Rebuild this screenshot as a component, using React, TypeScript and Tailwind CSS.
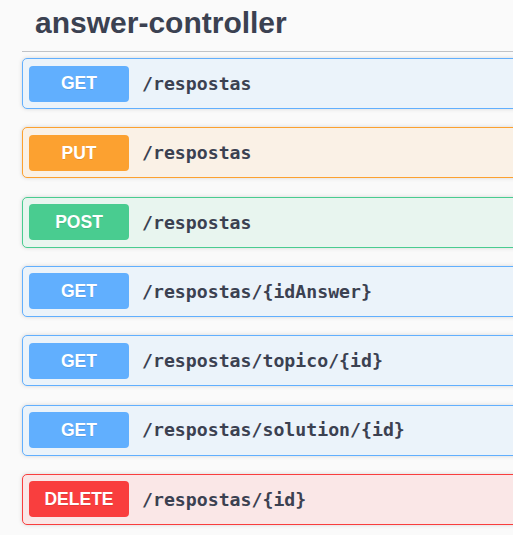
const operations = [
  { method: 'GET', path: '/respostas' },
  { method: 'PUT', path: '/respostas' },
  { method: 'POST', path: '/respostas' },
  { method: 'GET', path: '/respostas/{idAnswer}' },
  { method: 'GET', path: '/respostas/topico/{id}' },
  { method: 'GET', path: '/respostas/solution/{id}' },
  { method: 'DELETE', path: '/respostas/{id}' },
];

const methodStyles: Record<string, { box: string; badge: string }> = {
  GET: { box: 'border-[#61affe] bg-[#ebf3fa]', badge: 'bg-[#61affe]' },
  PUT: { box: 'border-[#fca130] bg-[#faf1e6]', badge: 'bg-[#fca130]' },
  POST: { box: 'border-[#49cc90] bg-[#e8f5ef]', badge: 'bg-[#49cc90]' },
  DELETE: { box: 'border-[#f93e3e] bg-[#fae7e7]', badge: 'bg-[#f93e3e]' },
};

export default function App() {
  return (
    <div className="h-[535px] w-[513px] overflow-hidden bg-[#fafafa] font-['Liberation_Sans',Arial,sans-serif] text-[#3b4151]">
      {/* Tag header */}
      <div className="ml-[22px] w-[560px] border-b border-[#c1c3c7] pb-[9px] pl-[13px] pt-[4px]">
        <h3 className="text-[30px] font-bold leading-[38px]">answer-controller</h3>
      </div>

      {/* Operations */}
      <div className="ml-[22px] mt-[6px] flex w-[560px] flex-col gap-[18.33px]">
        {operations.map((op, i) => {
          const s = methodStyles[op.method];
          return (
            <div
              key={i}
              className={`flex h-[51px] items-center rounded-[5px] border px-[6px] shadow-[0_0_4px_rgba(0,0,0,0.15)] ${s.box}`}
            >
              <span
                className={`flex h-[36px] w-[100px] items-center justify-center rounded-[4px] text-[17.5px] font-bold text-white [text-shadow:0_1px_0_rgba(0,0,0,0.1)] ${s.badge}`}
              >
                {op.method}
              </span>
              <span className="ml-[13px] font-['DejaVu_Sans_Mono',monospace] text-[18.2px] font-bold text-[#3b4151]">
                {op.path}
              </span>
            </div>
          );
        })}
      </div>
    </div>
  );
}
